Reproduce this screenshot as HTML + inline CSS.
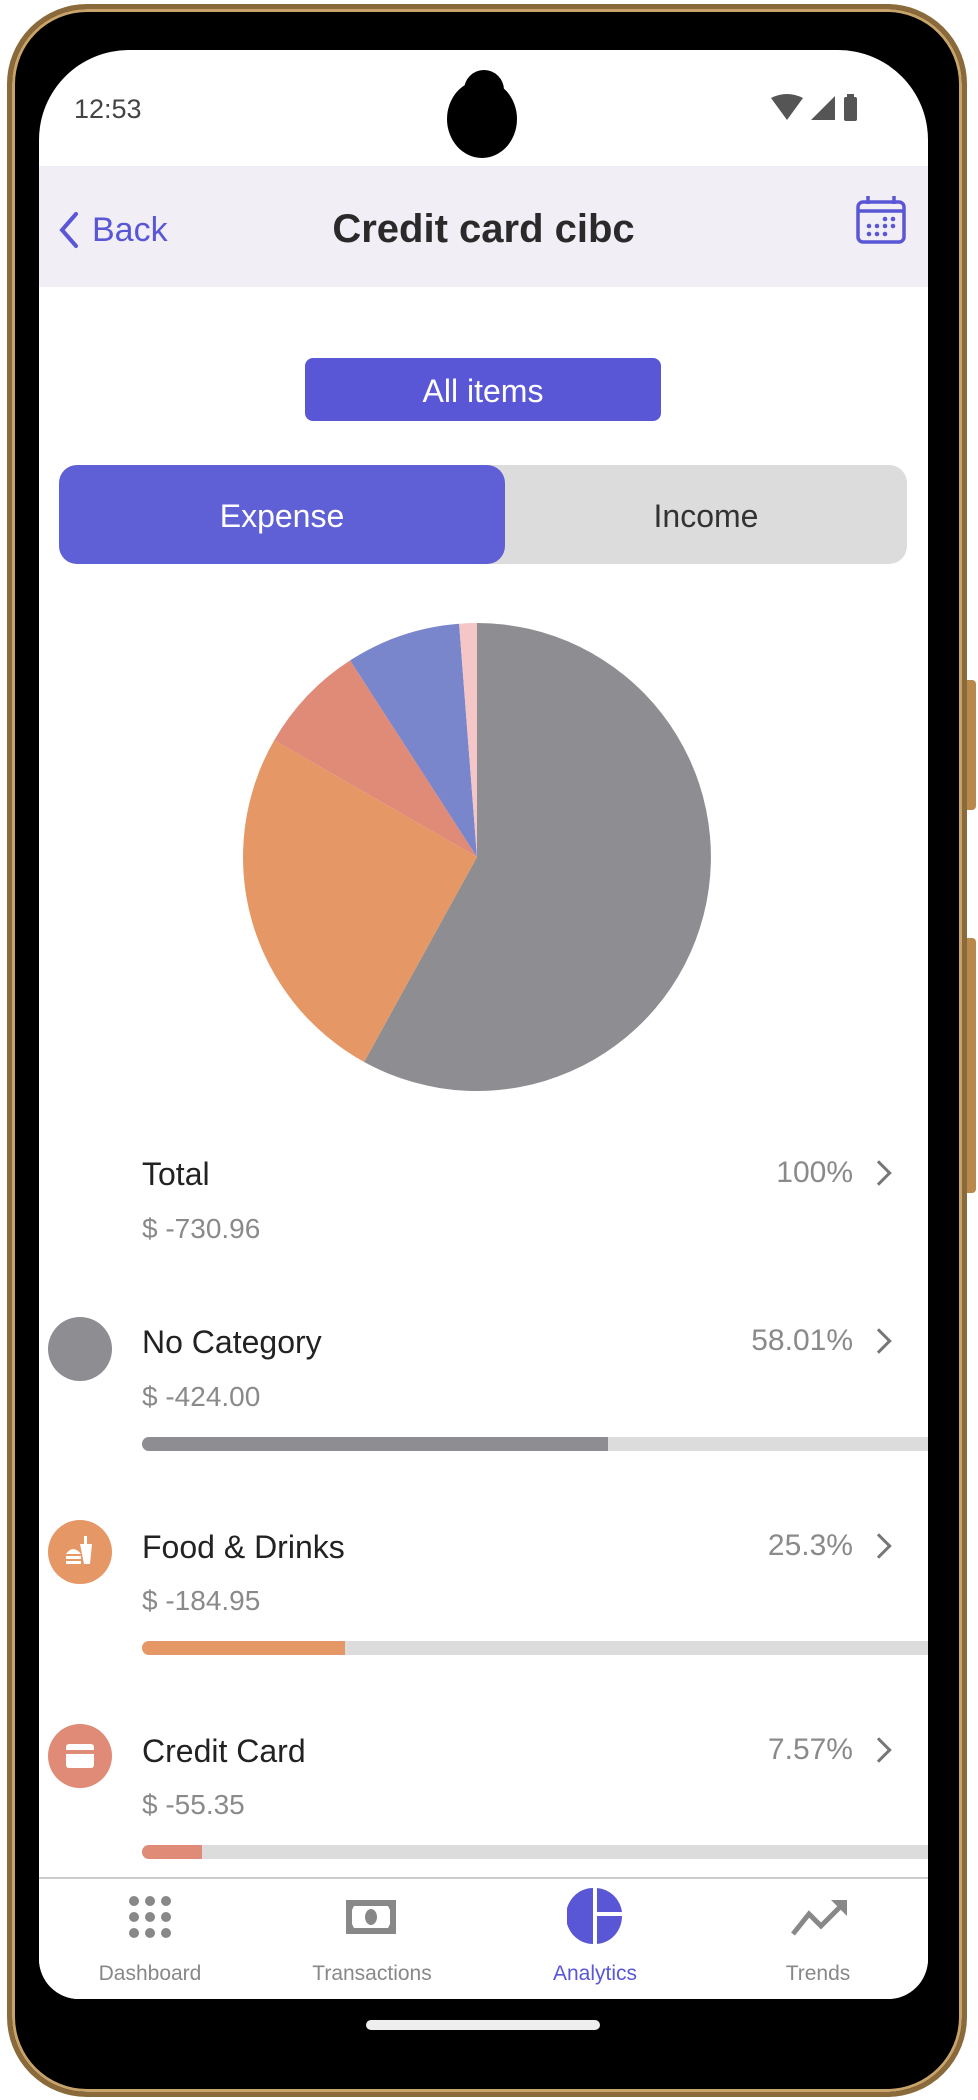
<!DOCTYPE html>
<html><head><meta charset="utf-8"><style>
*{margin:0;padding:0;box-sizing:border-box}
body{width:978px;height:2100px;background:#fff;position:relative;overflow:hidden;font-family:"Liberation Sans",sans-serif}
.abs{position:absolute}
.phone{left:7px;top:4px;width:960px;height:2093px;border-radius:80px;background:#000;border:5px solid #8a6a3a;box-shadow:inset 0 0 0 3px #c9a46a}
.screen{left:39px;top:50px;width:889px;height:1949px;background:#fff;border-radius:90px 90px 40px 40px;overflow:hidden}
.t{position:absolute;white-space:nowrap}
.name{font-size:32px;color:#222}
.amt{font-size:28px;color:#8a8a8a}
.pct{font-size:30px;color:#8a8a8a;text-align:right;width:200px}
.bar{position:absolute;left:103px;height:14px;width:800px;background:#dcdcdc;border-radius:7px 0 0 7px;overflow:hidden}
.bar div{height:100%}
.chev{position:absolute;width:18px;height:18px;border-right:3px solid #777;border-top:3px solid #777;transform:rotate(45deg)}
.tab{position:absolute;width:200px;text-align:center;font-size:21px;color:#888;top:1912px}
</style></head><body>
<div class="abs" style="left:956px;top:680px;width:20px;height:130px;background:#b8894a;border-radius:4px"></div>
<div class="abs" style="left:956px;top:938px;width:20px;height:255px;background:#b8894a;border-radius:4px"></div>
<div class="abs phone"></div>
<div class="abs screen">
  <div class="t" style="left:35px;top:44px;font-size:27px;color:#444">12:53</div>
  <svg class="abs" style="left:732px;top:44px" width="100" height="30" viewBox="0 0 100 30">
    <path d="M0 4 Q16 -4 32 4 L16 26Z" fill="#555"/>
    <path d="M40 26 L64 26 L64 2Z" fill="#555"/>
    <rect x="73" y="3" width="13" height="24" rx="2" fill="#555"/><rect x="76" y="0" width="7" height="4" fill="#555"/>
  </svg>
  <div class="abs" style="left:408px;top:30px;width:70px;height:78px;border-radius:50%;background:#000"></div>
  <div class="abs" style="left:425px;top:20px;width:40px;height:40px;border-radius:50%;background:#000"></div>
  <div class="abs" style="left:0;top:116px;width:889px;height:121px;background:#f2eef5"></div>
  <svg class="abs" style="left:15px;top:160px" width="30" height="40"><path d="M22 4 L8 20 L22 36" stroke="#5a57d6" stroke-width="4" fill="none" stroke-linecap="round"/></svg>
  <div class="t" style="left:53px;top:161px;font-size:34px;color:#5a57d6">Back</div>
  <div class="t" style="left:0;width:889px;text-align:center;top:157px;font-size:40px;font-weight:bold;color:#2a2a2a">Credit card cibc</div>
  <svg class="abs" style="left:816px;top:144px" width="52" height="52" viewBox="0 0 52 52">
    <rect x="3" y="8" width="46" height="40" rx="5" stroke="#5a57d6" stroke-width="3.5" fill="none"/>
    <line x1="3" y1="17" x2="49" y2="17" stroke="#5a57d6" stroke-width="3.5"/>
    <line x1="13" y1="2" x2="13" y2="10" stroke="#5a57d6" stroke-width="3.5"/><line x1="39" y1="2" x2="39" y2="10" stroke="#5a57d6" stroke-width="3.5"/>
    <g fill="#5a57d6"><circle cx="30" cy="25" r="2.3"/><circle cx="38" cy="25" r="2.3"/><circle cx="14" cy="32" r="2.3"/><circle cx="22" cy="32" r="2.3"/><circle cx="30" cy="32" r="2.3"/><circle cx="38" cy="32" r="2.3"/><circle cx="14" cy="40" r="2.3"/><circle cx="22" cy="40" r="2.3"/><circle cx="30" cy="40" r="2.3"/></g>
  </svg>
  <div class="abs" style="left:266px;top:308px;width:356px;height:63px;background:#5a57d6;border-radius:8px;color:#fff;font-size:32px;text-align:center;line-height:66px">All items</div>
  <div class="abs" style="left:20px;top:415px;width:848px;height:99px;background:#dcdcdc;border-radius:18px"></div>
  <div class="abs" style="left:20px;top:415px;width:446px;height:99px;background:#6060d6;border-radius:18px;color:#fff;font-size:32px;text-align:center;line-height:103px">Expense</div>
  <div class="t" style="left:466px;width:402px;top:415px;line-height:103px;text-align:center;font-size:32px;color:#333">Income</div>
  <svg class="abs" style="left:204px;top:573px" width="468" height="468" viewBox="-234 -234 468 468">
    <path d="M0 0 L0 -234 A234 234 0 1 1 -112.9 205 Z" fill="#8e8d92"/>
    <path d="M0 0 L-112.9 205 A234 234 0 0 1 -202.8 -116.7 Z" fill="#e59866"/>
    <path d="M0 0 L-202.8 -116.7 A234 234 0 0 1 -126.9 -196.6 Z" fill="#e08b78"/>
    <path d="M0 0 L-126.9 -196.6 A234 234 0 0 1 -17.9 -233.3 Z" fill="#7986cb"/>
    <path d="M0 0 L-17.9 -233.3 A234 234 0 0 1 0 -234 Z" fill="#f5c6c6"/>
  </svg>

  <div class="t name" style="left:103px;top:1106px">Total</div>
  <div class="t pct" style="left:614px;top:1106px">100%</div>
  <div class="chev" style="left:831px;top:1114px"></div>
  <div class="t amt" style="left:103px;top:1163px">$ -730.96</div>

  <div class="abs" style="left:9px;top:1267px;width:64px;height:64px;border-radius:50%;background:#8e8d92"></div>
  <div class="t name" style="left:103px;top:1274px">No Category</div>
  <div class="t pct" style="left:614px;top:1274px">58.01%</div>
  <div class="chev" style="left:831px;top:1282px"></div>
  <div class="t amt" style="left:103px;top:1331px">$ -424.00</div>
  <div class="bar" style="top:1387px"><div style="width:466px;background:#8e8d92"></div></div>

  <div class="abs" style="left:9px;top:1470px;width:64px;height:64px;border-radius:50%;background:#e59866"></div>
  <svg class="abs" style="left:21px;top:1482px" width="40" height="40" viewBox="0 0 40 40" fill="#fff">
    <rect x="24" y="4" width="3" height="8"/><path d="M20 12 H32 L30 32 H24Z"/>
    <path d="M6 22 Q13 12 21 22Z"/><rect x="6" y="24" width="15" height="3"/><rect x="6" y="29" width="15" height="3"/>
  </svg>
  <div class="t name" style="left:103px;top:1479px">Food &amp; Drinks</div>
  <div class="t pct" style="left:614px;top:1479px">25.3%</div>
  <div class="chev" style="left:831px;top:1487px"></div>
  <div class="t amt" style="left:103px;top:1535px">$ -184.95</div>
  <div class="bar" style="top:1591px"><div style="width:203px;background:#e59866"></div></div>

  <div class="abs" style="left:9px;top:1674px;width:64px;height:64px;border-radius:50%;background:#e08b78"></div>
  <div class="abs" style="left:27px;top:1694px;width:28px;height:24px;border-radius:3px;background:#fff"></div>
  <div class="abs" style="left:27px;top:1700px;width:28px;height:4px;background:#e08b78"></div>
  <div class="t name" style="left:103px;top:1683px">Credit Card</div>
  <div class="t pct" style="left:614px;top:1683px">7.57%</div>
  <div class="chev" style="left:831px;top:1691px"></div>
  <div class="t amt" style="left:103px;top:1739px">$ -55.35</div>
  <div class="bar" style="top:1795px"><div style="width:60px;background:#e08b78"></div></div>

  <div class="abs" style="left:0;top:1827px;width:889px;height:122px;background:#fff;border-top:2px solid #ccc"></div>
  <svg class="abs" style="left:87px;top:1843px" width="48" height="48" viewBox="0 0 48 48" fill="#888">
    <circle cx="8" cy="8" r="5"/><circle cx="24" cy="8" r="5"/><circle cx="40" cy="8" r="5"/>
    <circle cx="8" cy="24" r="5"/><circle cx="24" cy="24" r="5"/><circle cx="40" cy="24" r="5"/>
    <circle cx="8" cy="40" r="5"/><circle cx="24" cy="40" r="5"/><circle cx="40" cy="40" r="5"/>
  </svg>
  <svg class="abs" style="left:307px;top:1850px" width="50" height="34" viewBox="0 0 50 34">
    <rect x="0" y="0" width="50" height="34" fill="#888"/><path d="M8 6 H42 L44 10 V24 L42 28 H8 L6 24 V10Z" fill="#fff"/><ellipse cx="25" cy="17" rx="6" ry="8" fill="#888"/>
  </svg>
  <svg class="abs" style="left:528px;top:1837px" width="56" height="58" viewBox="0 0 56 58">
    <path d="M26 1 A27 28 0 0 0 26 57Z" fill="#5a57d6"/><path d="M30 1 A27 28 0 0 1 55 25 H30Z" fill="#5a57d6"/><path d="M30 29 H55 A27 28 0 0 1 30 57Z" fill="#5a57d6"/>
  </svg>
  <svg class="abs" style="left:752px;top:1848px" width="58" height="40" viewBox="0 0 58 40">
    <path d="M2 36 L18 16 L30 28 L52 6" stroke="#888" stroke-width="5" fill="none"/><path d="M40 2 H56 V18Z" fill="#888"/>
  </svg>
  <div class="tab" style="left:11px">Dashboard</div>
  <div class="tab" style="left:233px">Transactions</div>
  <div class="tab" style="left:456px;color:#5a57d6">Analytics</div>
  <div class="tab" style="left:679px">Trends</div>
</div>
<div class="abs" style="left:366px;top:2020px;width:234px;height:10px;border-radius:5px;background:#eee"></div>
</body></html>
